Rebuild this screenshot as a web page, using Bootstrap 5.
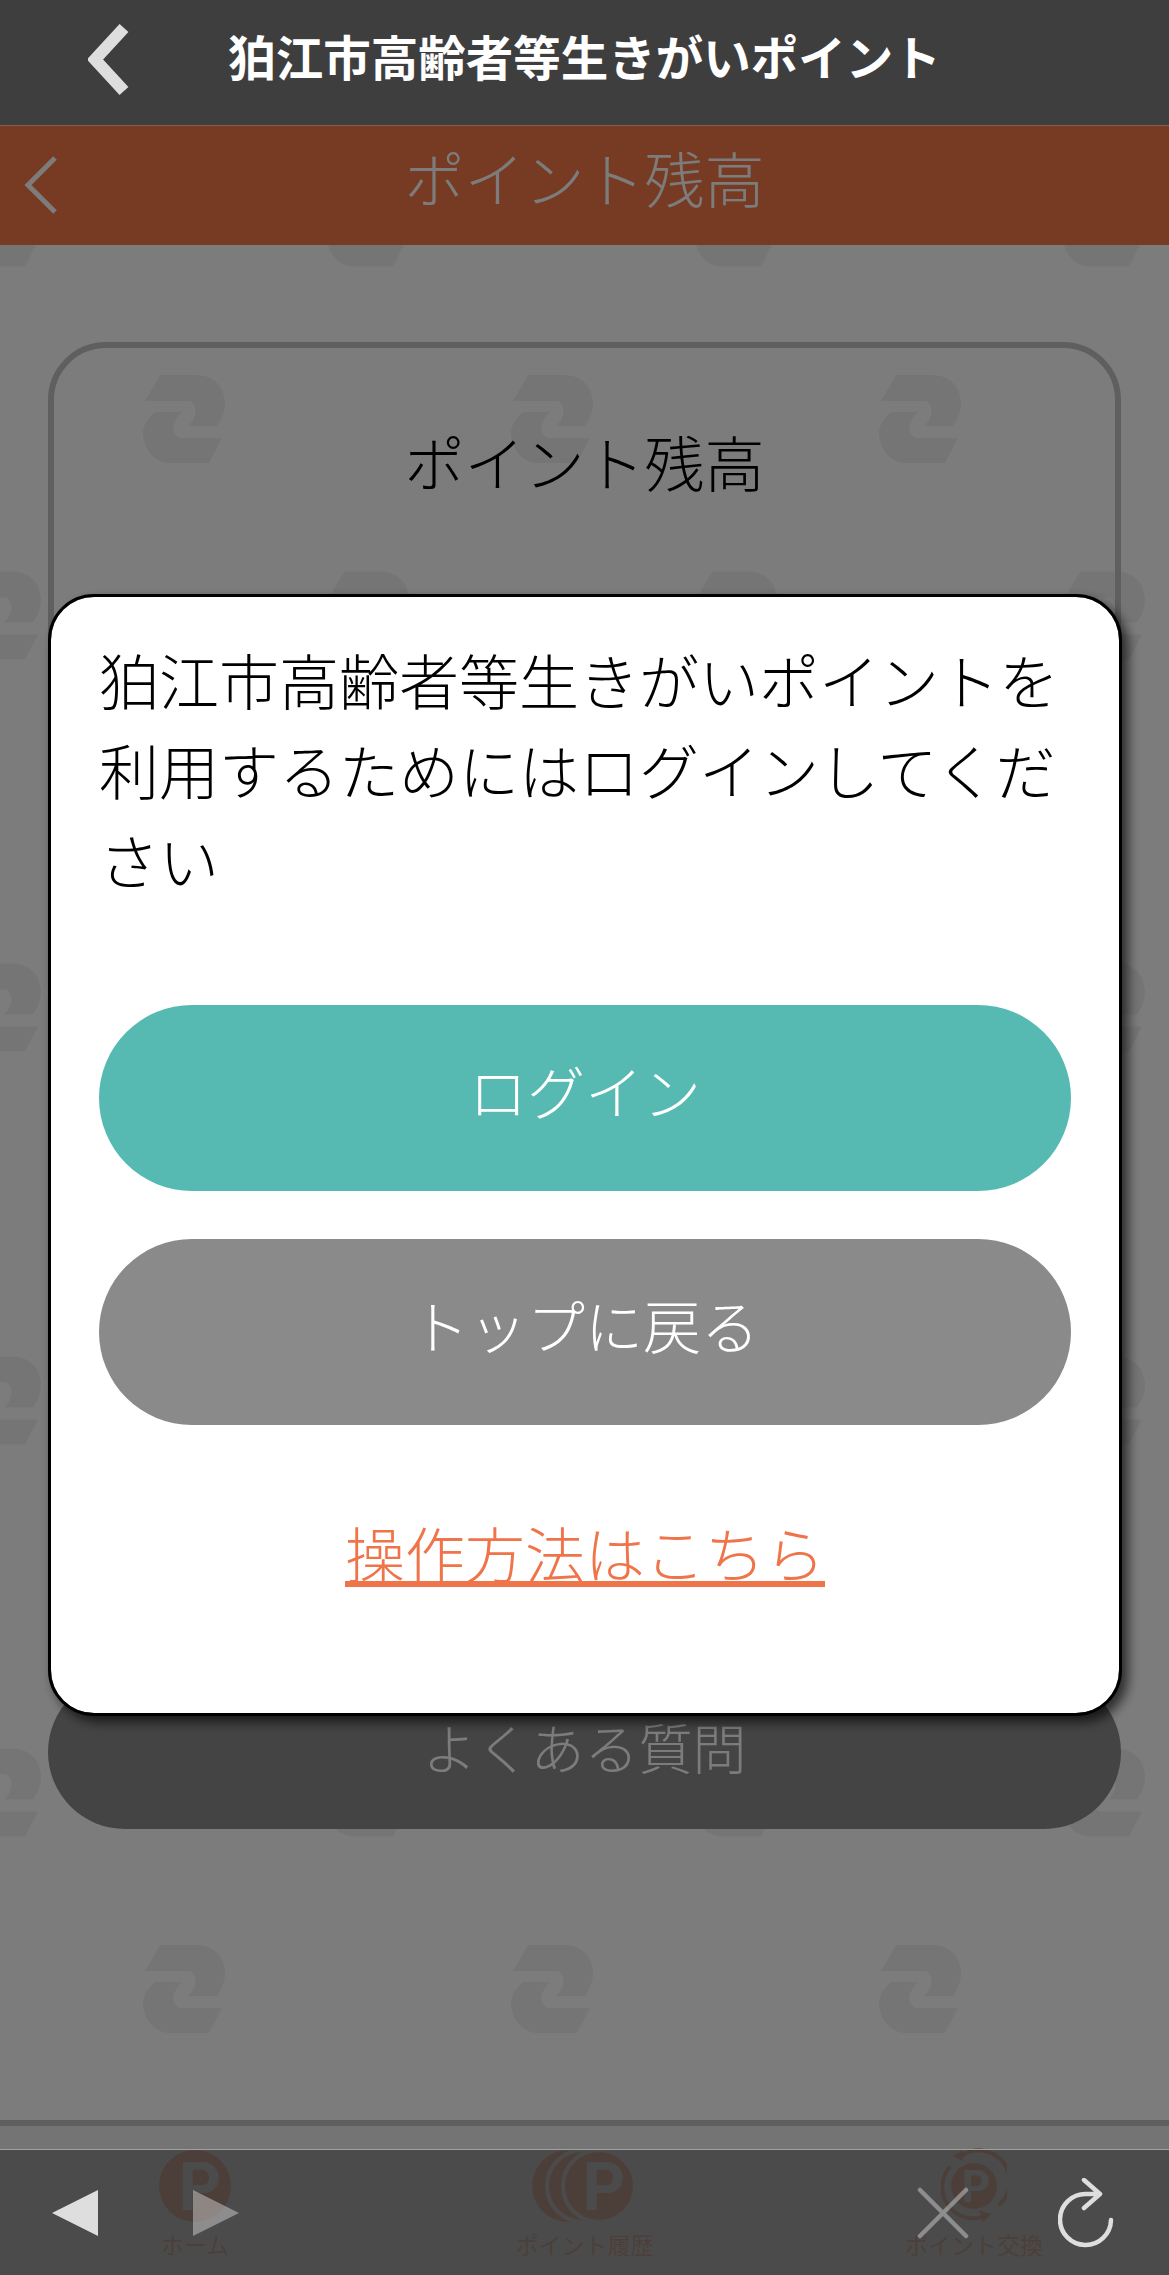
<!DOCTYPE html>
<html lang="ja">
<head>
  <meta charset="UTF-8">
  <meta name="viewport" content="width=device-width, initial-scale=1.0">
  <title>狛江市高齢者等生きがいポイント</title>
  <link href="https://cdn.jsdelivr.net/npm/bootstrap@5.3.0/dist/css/bootstrap.min.css" rel="stylesheet">
  <style>
    body {
      font-family: "Liberation Serif", "Noto Sans CJK JP", serif;
      background-color: #fff;
      color: #000;
    }
    .browser-bar {
      height: 126px;
      background-color: #3e3e3e;
      border-bottom: 1px solid #8a5c48;
      z-index: 1060;
    }
    .browser-back {
      position: absolute;
      left: 88px;
      top: 23px;
    }
    .browser-title {
      font-family: "Noto Sans CJK JP", sans-serif;
      font-size: 47.5px;
      font-weight: 700;
      color: #fff;
      line-height: 1;
      padding-bottom: 14px;
    }
    .page-band {
      height: 119px;
      padding-bottom: 6px;
      background-color: #f57846;
      color: #fff;
      font-size: 60px;
      font-weight: 300;
    }
    .page-back {
      position: absolute;
      left: 24px;
      top: 30px;
    }
    .page-body {
      padding: 97px 48px 0;
      background-color: #fff;
      background-image: url("data:image/svg+xml,%3Csvg xmlns='http://www.w3.org/2000/svg' width='368' height='392.5'%3E%3Cdefs%3E%3Cg id='m' fill='%23f1f1f1'%3E%3Cpath d='M17 0H54C72 0 82 14 82 28C82 37 79 44 74 51H45C53 44 56 32 47 26H2Z'/%3E%3Cpath d='M12 37H39C29 47 27 58 37 63H79L66 88H27C10 88 0 72 0 58C0 50 5 43 12 37Z'/%3E%3C/g%3E%3C/defs%3E%3Cuse href='%23m'/%3E%3Cuse href='%23m' x='184' y='196.25'/%3E%3C/svg%3E");
      background-size: 368px 392.5px;
      background-position: 143px 130px;
    }
    .balance-box {
      height: 1288px;
      background-color: transparent;
      border: 6px solid #c4c4c4;
      border-radius: 58px;
      padding-top: 74px;
    }
    .balance-heading {
      font-size: 60px;
      font-weight: 300;
      line-height: 90px;
      margin: 0;
    }
    .faq-btn {
      height: 154px;
      margin-top: 45px;
      background-color: #8c8c8c;
      color: #fff;
      font-size: 54px;
      font-weight: 300;
      border: 0;
    }
    .tab-bar {
      height: 155px;
      background-color: #efefef;
      border-top: 6px solid #c4c4c4;
      padding-top: 24px;
      color: #f57846;
    }
    .tab-item {
      width: 33.33%;
      line-height: 1;
    }
    .tab-icon {
      margin-top: -6px;
      margin-bottom: -18px;
    }
    .tab-label {
      font-size: 23px;
      font-weight: 400;
      line-height: 50px;
    }
    .tab-p {
      font-family: Roboto, sans-serif;
      font-weight: 700;
      font-size: 66px;
    }
    .tab-p-small {
      font-size: 44px;
    }
    .browser-tools {
      position: absolute;
      left: 0;
      right: 0;
      bottom: 0;
      height: 126px;
      padding: 0 55px 0 52px;
      background-color: rgba(65, 65, 65, .8);
      border-top: 1px solid #a0a0a0;
      z-index: 1060;
    }
    .tool-gap-a { margin-left: 95px; }
    .tool-gap-b { margin-left: 89px; }
    .modal-backdrop.show { opacity: .515; }
    .modal-dialog.notice-dialog {
      max-width: none;
      margin: 594px 47px 0 48px;
    }
    .notice-box {
      height: 1122px;
      border: 3px solid #000;
      border-radius: 46px;
      box-shadow: 6px 6px 12px rgba(0, 0, 0, .65);
      padding: 43px 48px 0 48px;
    }
    .notice-text {
      font-size: 60px;
      font-weight: 300;
      line-height: 90px;
      margin: 0 0 95px;
    }
    .notice-btn {
      height: 186px;
      padding-bottom: 12px;
      font-size: 58px;
      font-weight: 300;
      color: #fff;
      border: 0;
      margin-bottom: 48px;
      display: flex;
      align-items: center;
      justify-content: center;
    }
    .notice-btn:hover { color: #fff; }
    .btn-login { background-color: #56bab3; }
    .btn-top { background-color: #8a8a8a; }
    .notice-link {
      display: block;
      margin-top: 40px;
      font-size: 60px;
      font-weight: 300;
      line-height: 90px;
      color: #f0744a;
    }
  </style>
</head>
<body class="d-flex flex-column min-vh-100 position-relative">

  <!-- browser header -->
  <div class="browser-bar position-relative d-flex align-items-center justify-content-center flex-shrink-0">
    <svg class="browser-back" width="42" height="73" viewBox="0 0 42 73"><path d="M36 5 L7 36.5 L36 68" fill="none" stroke="#dedede" stroke-width="12"/></svg>
    <div class="browser-title">狛江市高齢者等生きがいポイント</div>
  </div>

  <!-- app page -->
  <div class="page-band position-relative d-flex align-items-center justify-content-center flex-shrink-0">
    <svg class="page-back" width="34" height="58" viewBox="0 0 34 58"><path d="M31 2 L4 29 L31 56" fill="none" stroke="#fff" stroke-width="5"/></svg>
    <span>ポイント残高</span>
  </div>

  <main class="page-body flex-grow-1">
    <div class="card balance-box text-center">
      <h2 class="balance-heading">ポイント残高</h2>
    </div>
    <button type="button" class="btn faq-btn rounded-pill w-100">よくある質問</button>
  </main>

  <nav class="tab-bar d-flex flex-shrink-0">
    <div class="tab-item d-flex flex-column align-items-center">
      <svg class="tab-icon" width="72" height="96" viewBox="0 -6 72 96">
        <circle cx="36" cy="36" r="36" fill="#f57846"/>
        <text x="41" y="60" text-anchor="middle" class="tab-p" fill="#efefef">P</text>
      </svg>
      <span class="tab-label">ホーム</span>
    </div>
    <div class="tab-item d-flex flex-column align-items-center">
      <svg class="tab-icon" width="104" height="96" viewBox="0 -6 104 96">
        <circle cx="36" cy="36" r="36" fill="#f57846"/>
        <circle cx="51" cy="36" r="36" fill="#f57846" stroke="#efefef" stroke-width="4"/>
        <circle cx="67" cy="36" r="36" fill="#f57846" stroke="#efefef" stroke-width="4"/>
        <text x="72" y="60" text-anchor="middle" class="tab-p" fill="#efefef">P</text>
      </svg>
      <span class="tab-label">ポイント履歴</span>
    </div>
    <div class="tab-item d-flex flex-column align-items-center">
      <svg class="tab-icon" width="66" height="96" viewBox="0 -6 66 96">
        <circle cx="33" cy="36" r="23" fill="#f57846"/>
        <text x="35" y="52" text-anchor="middle" class="tab-p tab-p-small" fill="#efefef">P</text>
        <path d="M20 6 A31 31 0 0 1 59 54" fill="none" stroke="#f57846" stroke-width="4" stroke-linecap="round"/>
        <path d="M8 18 A31 31 0 0 0 44 66" fill="none" stroke="#f57846" stroke-width="4" stroke-linecap="round"/>
        <path d="M22 0V11L12 6Z" fill="#f57846"/>
        <path d="M38 60L50 64L42 72Z" fill="#f57846"/>
      </svg>
      <span class="tab-label">ポイント交換</span>
    </div>

    <!-- browser toolbar lies over the tab bar -->
    <div class="browser-tools d-flex align-items-center">
      <svg width="46" height="46" viewBox="0 0 46 46"><path d="M46 0V46L0 23Z" fill="#dedede"/></svg>
      <svg class="tool-gap-a" width="46" height="46" viewBox="0 0 46 46"><path d="M0 0V46L46 23Z" fill="rgba(222,222,222,.45)"/></svg>
      <svg class="ms-auto" width="52" height="52" viewBox="0 0 52 52"><path d="M3 3L49 49M49 3L3 49" fill="none" stroke="rgba(222,222,222,.45)" stroke-width="4.5" stroke-linecap="round"/></svg>
      <svg class="tool-gap-b" width="56" height="70" viewBox="0 0 56 70"><path d="M53 42 A25.5 25.5 0 1 1 28 16 L41 16 M26 2 L42 16 L26 30" fill="none" stroke="#dedede" stroke-width="4.5" stroke-linecap="round" stroke-linejoin="round"/></svg>
    </div>
  </nav>

  <!-- dialog -->
  <div class="modal-backdrop show"></div>
  <div class="modal d-block" tabindex="-1">
    <div class="modal-dialog notice-dialog">
      <div class="modal-content notice-box">
        <p class="notice-text">狛江市高齢者等生きがいポイントを利用するためにはログインしてください</p>
        <a href="#" class="btn notice-btn btn-login rounded-pill w-100">ログイン</a>
        <a href="#" class="btn notice-btn btn-top rounded-pill w-100">トップに戻る</a>
        <a href="#" class="notice-link text-center">操作方法はこちら</a>
      </div>
    </div>
  </div>

  <script src="https://cdn.jsdelivr.net/npm/bootstrap@5.3.0/dist/js/bootstrap.bundle.min.js"></script>
</body>
</html>
